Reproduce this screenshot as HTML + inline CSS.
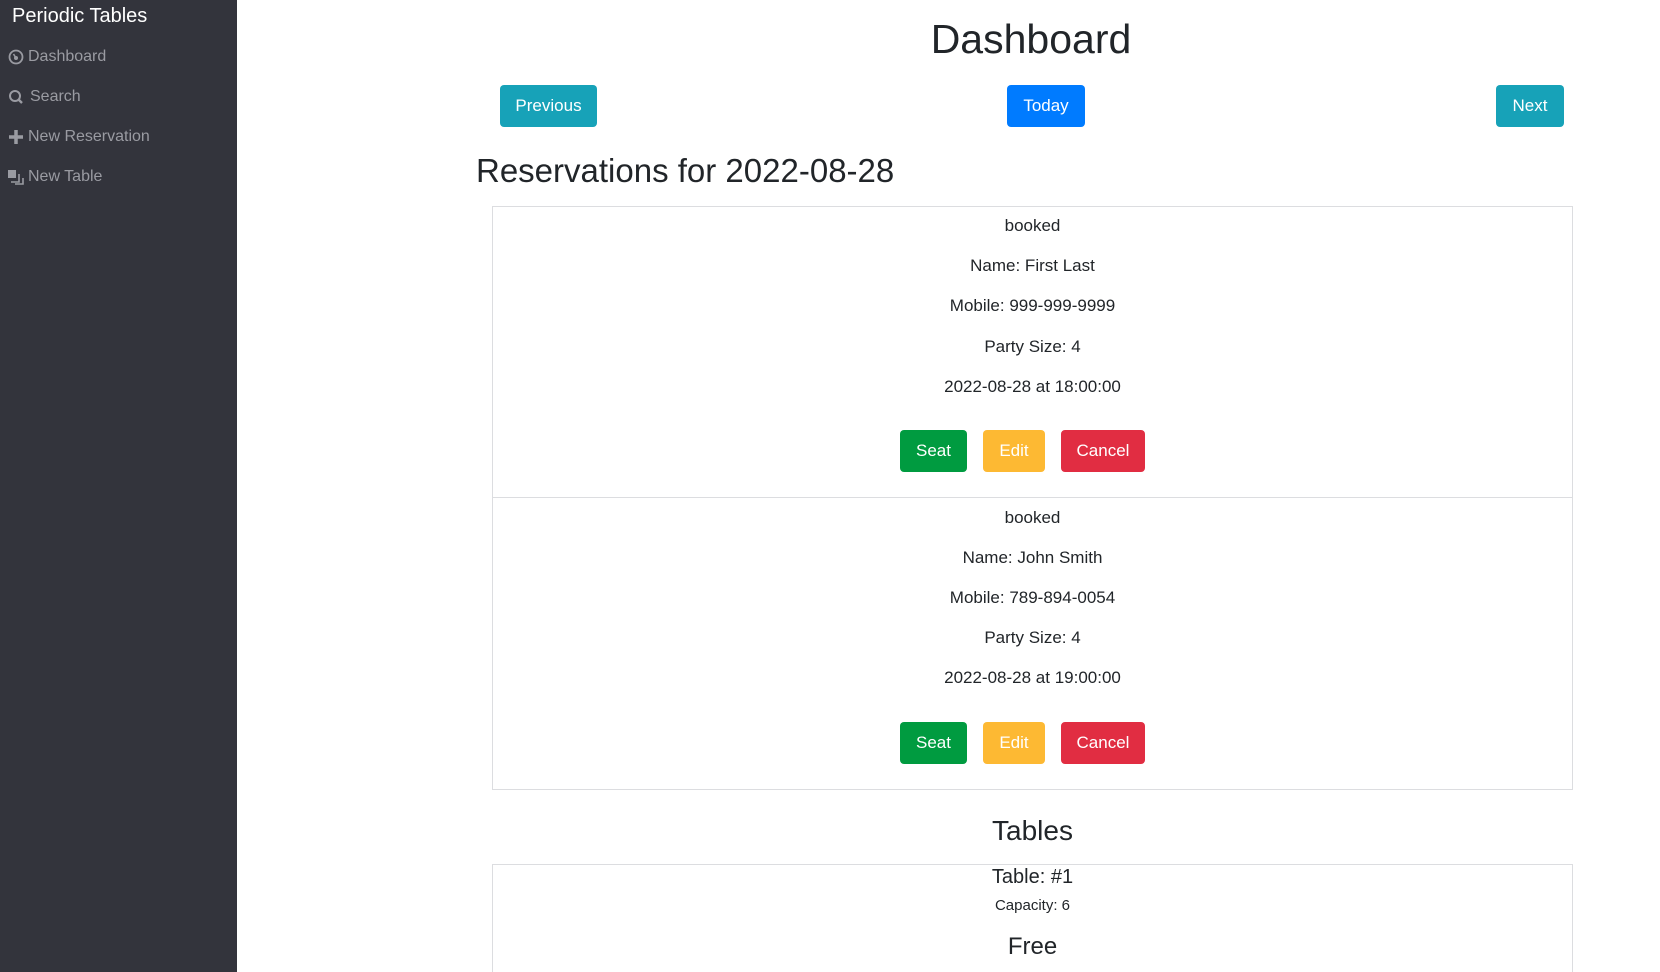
<!DOCTYPE html>
<html style="overflow:hidden;height:972px"><head><style>
*{box-sizing:border-box;margin:0;padding:0}
body{width:1660px;height:972px;overflow:hidden;font-family:"Liberation Sans",sans-serif;color:#212529;background:#fff;position:relative}
.side{position:absolute;left:0;top:0;width:237px;height:972px;background:#33343c}
.side .t{position:absolute;left:12px;top:5px;color:#fff;font-size:20px}
.nav{position:absolute;left:8px;color:#9a9ba2;font-size:16px;display:flex;align-items:center;gap:4px}
.a{position:absolute;white-space:nowrap}
.c{position:absolute;left:492px;width:1081px;text-align:center;font-size:17px}
.btn{position:absolute;color:#fff;font-size:17px;border-radius:4px;display:flex;align-items:center;justify-content:center}
.card{position:absolute;left:492px;width:1081px;border:1px solid #dcdde0}
</style></head><body>
<div class="side">
<div class="t">Periodic Tables</div>
<div class="nav" style="top:48px"><svg width="16" height="16" viewBox="0 0 16 16"><circle cx="8" cy="8" r="6.5" fill="none" stroke="#9a9ba2" stroke-width="1.8"/><circle cx="8" cy="9" r="2" fill="#9a9ba2"/><path d="M8 9 L5.5 5" stroke="#9a9ba2" stroke-width="1.6"/></svg>Dashboard</div>
<div class="nav" style="top:88px"><svg width="18" height="16" viewBox="0 0 18 16"><circle cx="7" cy="7" r="5" fill="none" stroke="#9a9ba2" stroke-width="2"/><path d="M10.5 10.5 L14 14" stroke="#9a9ba2" stroke-width="2.4"/></svg>Search</div>
<div class="nav" style="top:128px"><svg width="16" height="16" viewBox="0 0 16 16"><path d="M8 1V15M1 8H15" stroke="#9a9ba2" stroke-width="3.5"/></svg>New Reservation</div>
<div class="nav" style="top:168px"><svg width="16" height="16" viewBox="0 0 16 16"><rect x="0" y="1" width="8" height="8" fill="#9a9ba2"/><path d="M11 5V13H3M15 9V15H7" fill="none" stroke="#9a9ba2" stroke-width="1.6"/></svg>New Table</div>
</div>
<div class="a" style="left:0;width:2062px;text-align:center;top:16px;font-size:41px">Dashboard</div>
<div class="btn" style="left:500px;top:85px;width:97px;height:42px;background:#17a2b8">Previous</div>
<div class="btn" style="left:1007px;top:85px;width:78px;height:42px;background:#007bff">Today</div>
<div class="btn" style="left:1496px;top:85px;width:68px;height:42px;background:#17a2b8">Next</div>
<div class="a" style="left:476px;top:152px;font-size:33px">Reservations for 2022-08-28</div>

<div class="card" style="top:206px;height:292px"></div>
<div class="card" style="top:497px;height:293px"></div>
<div class="c" style="top:216px">booked</div>
<div class="c" style="top:256px">Name: First Last</div>
<div class="c" style="top:296px">Mobile: 999-999-9999</div>
<div class="c" style="top:337px">Party Size: 4</div>
<div class="c" style="top:377px">2022-08-28 at 18:00:00</div>
<div class="btn" style="left:900px;top:430px;width:67px;height:42px;background:#009b40">Seat</div>
<div class="btn" style="left:983px;top:430px;width:62px;height:42px;background:#fdb933">Edit</div>
<div class="btn" style="left:1061px;top:430px;width:84px;height:42px;background:#e12d42">Cancel</div>

<div class="c" style="top:508px">booked</div>
<div class="c" style="top:548px">Name: John Smith</div>
<div class="c" style="top:588px">Mobile: 789-894-0054</div>
<div class="c" style="top:628px">Party Size: 4</div>
<div class="c" style="top:668px">2022-08-28 at 19:00:00</div>
<div class="btn" style="left:900px;top:722px;width:67px;height:42px;background:#009b40">Seat</div>
<div class="btn" style="left:983px;top:722px;width:62px;height:42px;background:#fdb933">Edit</div>
<div class="btn" style="left:1061px;top:722px;width:84px;height:42px;background:#e12d42">Cancel</div>

<div class="c" style="top:815px;font-size:28px">Tables</div>
<div class="card" style="top:864px;height:108px;border-bottom:none"></div>
<div class="c" style="top:866px;font-size:20px">Table: #1</div>
<div class="c" style="top:897px;font-size:15px">Capacity: 6</div>
<div class="c" style="top:933px;font-size:24px">Free</div>
</body></html>
